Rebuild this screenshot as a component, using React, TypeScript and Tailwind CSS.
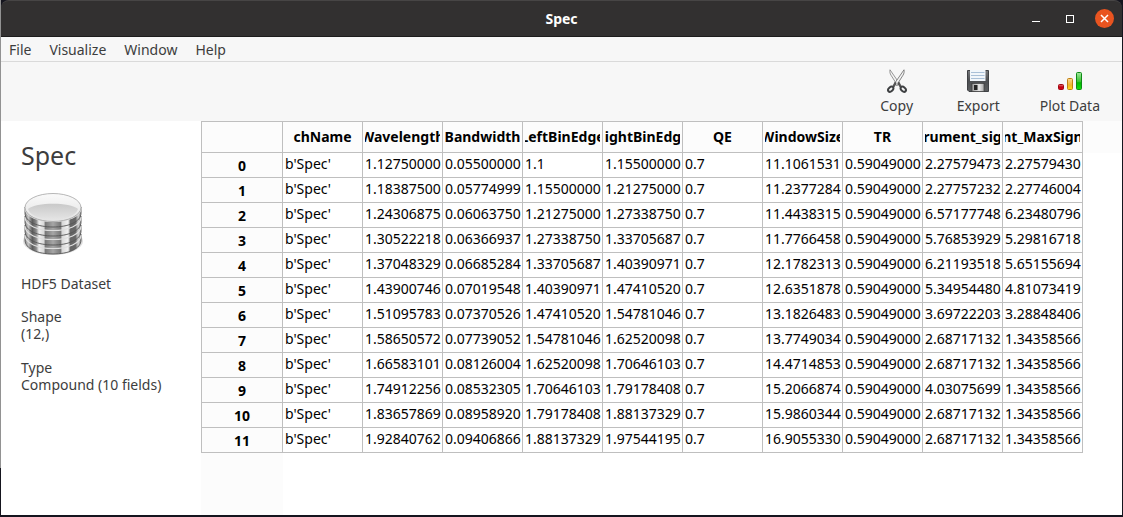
import React from "react";

const menus = ["File", "Visualize", "Window", "Help"];

const columns = [
  "chName",
  "Wavelength",
  "Bandwidth",
  "LeftBinEdge",
  "RightBinEdge",
  "QE",
  "WindowSize",
  "TR",
  "rument_sig",
  "nt_MaxSign",
];

const rows: string[][] = [
  ["1.12750000", "0.05500000", "1.1", "1.15500000", "0.7", "11.1061531", "0.59049000", "2.27579473", "2.27579430"],
  ["1.18387500", "0.05774999", "1.15500000", "1.21275000", "0.7", "11.2377284", "0.59049000", "2.27757232", "2.27746004"],
  ["1.24306875", "0.06063750", "1.21275000", "1.27338750", "0.7", "11.4438315", "0.59049000", "6.57177748", "6.23480796"],
  ["1.30522218", "0.06366937", "1.27338750", "1.33705687", "0.7", "11.7766458", "0.59049000", "5.76853929", "5.29816718"],
  ["1.37048329", "0.06685284", "1.33705687", "1.40390971", "0.7", "12.1782313", "0.59049000", "6.21193518", "5.65155694"],
  ["1.43900746", "0.07019548", "1.40390971", "1.47410520", "0.7", "12.6351878", "0.59049000", "5.34954480", "4.81073419"],
  ["1.51095783", "0.07370526", "1.47410520", "1.54781046", "0.7", "13.1826483", "0.59049000", "3.69722203", "3.28848406"],
  ["1.58650572", "0.07739052", "1.54781046", "1.62520098", "0.7", "13.7749034", "0.59049000", "2.68717132", "1.34358566"],
  ["1.66583101", "0.08126004", "1.62520098", "1.70646103", "0.7", "14.4714853", "0.59049000", "2.68717132", "1.34358566"],
  ["1.74912256", "0.08532305", "1.70646103", "1.79178408", "0.7", "15.2066874", "0.59049000", "4.03075699", "1.34358566"],
  ["1.83657869", "0.08958920", "1.79178408", "1.88137329", "0.7", "15.9860344", "0.59049000", "2.68717132", "1.34358566"],
  ["1.92840762", "0.09406866", "1.88137329", "1.97544195", "0.7", "16.9055330", "0.59049000", "2.68717132", "1.34358566"],
];

function ScissorsIcon() {
  return (
    <svg width="24" height="24" viewBox="0 0 24 24" aria-hidden="true">
      <path d="M5 .8 C4.6 3 5 4.6 6 6.2 L12.6 16.6 L14.4 14.4 Z" fill="#f4f4f4" stroke="#8a8a8a" strokeWidth=".9" />
      <path d="M19 .8 C19.4 3 19 4.6 18 6.2 L11.4 16.6 L9.6 14.4 Z" fill="#f4f4f4" stroke="#777" strokeWidth=".9" />
      <path d="M10.8 13.4 L8.2 18 M13.2 13.4 L15.8 18" stroke="#555" strokeWidth="2.4" />
      <ellipse cx="5.7" cy="20.2" rx="3" ry="2" transform="rotate(-42 5.7 20.2)" fill="#f7f7f7" stroke="#3e4042" strokeWidth="2" />
      <ellipse cx="18.3" cy="20.2" rx="3" ry="2" transform="rotate(42 18.3 20.2)" fill="#f7f7f7" stroke="#3e4042" strokeWidth="2" />
      <circle cx="12" cy="14" r=".8" fill="#ddd" />
    </svg>
  );
}

function FloppyIcon() {
  return (
    <svg width="24" height="24" viewBox="0 0 24 24" aria-hidden="true">
      <defs>
        <linearGradient id="body" x1="0" y1="0" x2="0" y2="1">
          <stop offset="0" stopColor="#77797c" />
          <stop offset=".5" stopColor="#4c4e51" />
          <stop offset="1" stopColor="#5c5e60" />
        </linearGradient>
        <linearGradient id="shutter" x1="0" y1="0" x2="1" y2="0">
          <stop offset="0" stopColor="#9a9a9a" />
          <stop offset=".6" stopColor="#e6e6e6" />
          <stop offset="1" stopColor="#a8a8a8" />
        </linearGradient>
      </defs>
      <path d="M1.5 1.5 H22.5 V22.5 H3 L1.5 21 Z" fill="url(#body)" stroke="#3f4144" />
      <rect x="4" y="1" width="15.5" height="11" fill="#f1f6fb" />
      <path d="M5 3.5 H18.5 M5 6.5 H18.5 M5 9.5 H18.5" stroke="#a9c0d8" />
      <rect x="6" y="14.5" width="12" height="8" fill="url(#shutter)" stroke="#333" strokeWidth=".6" />
      <rect x="8" y="16" width="3.5" height="5" fill="#232323" />
    </svg>
  );
}

function BarsIcon() {
  return (
    <svg width="26" height="24" viewBox="0 0 26 24" aria-hidden="true">
      <defs>
        <linearGradient id="green" x1="0" y1="0" x2="0" y2="1">
          <stop offset="0" stopColor="#a4e6a0" />
          <stop offset=".55" stopColor="#35c22e" />
          <stop offset=".6" stopColor="#00b800" />
          <stop offset="1" stopColor="#12dc10" />
        </linearGradient>
        <linearGradient id="amber" x1="0" y1="0" x2="0" y2="1">
          <stop offset="0" stopColor="#f8d797" />
          <stop offset=".6" stopColor="#eeb52c" />
          <stop offset="1" stopColor="#ffdf10" />
        </linearGradient>
        <linearGradient id="red" x1="0" y1="0" x2="0" y2="1">
          <stop offset="0" stopColor="#e87b7b" />
          <stop offset=".5" stopColor="#c00010" />
          <stop offset="1" stopColor="#e00018" />
        </linearGradient>
      </defs>
      <rect x="1.5" y="15.5" width="5" height="5" rx="1" fill="url(#red)" stroke="#a00812" />
      <rect x="10.5" y="9.5" width="5" height="11" rx="1" fill="url(#amber)" stroke="#c07f10" />
      <rect x="19.5" y="3.5" width="5" height="17" rx="1" fill="url(#green)" stroke="#0d8a16" />
    </svg>
  );
}

function DatabaseIcon() {
  return (
    <svg width="64" height="64" viewBox="0 0 64 64" aria-hidden="true">
      <defs>
        <linearGradient id="metal" x1="0" y1="0" x2="1" y2="0">
          <stop offset="0" stopColor="#8a8a8a" />
          <stop offset=".06" stopColor="#c5c5c5" />
          <stop offset=".13" stopColor="#5c5c5c" />
          <stop offset=".2" stopColor="#8a8a8a" />
          <stop offset=".25" stopColor="#f0f0f0" />
          <stop offset=".34" stopColor="#d8d8d8" />
          <stop offset=".36" stopColor="#777" />
          <stop offset=".5" stopColor="#a6a6a6" />
          <stop offset=".64" stopColor="#777" />
          <stop offset=".66" stopColor="#d8d8d8" />
          <stop offset=".77" stopColor="#f2f2f2" />
          <stop offset=".81" stopColor="#666" />
          <stop offset=".9" stopColor="#666" />
          <stop offset=".95" stopColor="#cfcfcf" />
          <stop offset="1" stopColor="#8a8a8a" />
        </linearGradient>
        <linearGradient id="lid" x1="0" y1="0" x2="0" y2="1">
          <stop offset="0" stopColor="#fafafa" />
          <stop offset="1" stopColor="#e2e2e2" />
        </linearGradient>
        <linearGradient id="pool" x1="0" y1="0" x2="0" y2="1">
          <stop offset="0" stopColor="#c9c9c9" />
          <stop offset="1" stopColor="#e4e4e4" />
        </linearGradient>
      </defs>
      <ellipse cx="32" cy="49" rx="30" ry="14" fill="#dedede" />
      {[42, 33, 24, 15].map((y) => (
        <g key={y} transform={`translate(0 ${y})`}>
          <path d="M4 0 V6 C4 15 17 20 32 20 C47 20 60 15 60 6 V0 Z" fill="url(#metal)" stroke="#555" strokeWidth=".9" />
          <path d="M4 1 C4 9.500 17 14.500 32 14.500 C47 14.500 60 9.500 60 1" fill="none" stroke="#dedede" strokeWidth="1.2" />
        </g>
      ))}
      <ellipse cx="32" cy="15.5" rx="28" ry="14" fill="url(#lid)" stroke="#a5a5a5" strokeWidth=".8" />
      <path d="M7 17 C15 10 49 10 57 17 C55 23 46 27.500 32 27.500 C18 27.500 9 23 7 17 Z" fill="url(#pool)" />
    </svg>
  );
}

function Tool({ label, children }: { label: string; children: React.ReactNode }) {
  return (
    <button type="button" className="flex min-w-20 flex-col items-center gap-[3px] px-5 pt-[7px] pb-1">
      {children}
      <span className="leading-5">{label}</span>
    </button>
  );
}

export default function App() {
  return (
    <div className="flex min-h-screen flex-col bg-[#15151e] bg-[linear-gradient(#929292,#929292)] bg-[length:1px_468px] bg-no-repeat px-px pb-[2px] font-['Noto_Sans',sans-serif] text-[14px] text-[#3d3d3d]">
      <header className="grid h-[37px] grid-cols-[1fr_auto_1fr] items-center rounded-t-lg border-t border-b border-t-[#474545] border-b-[#1d1c1c] bg-[#323030] text-white">
        <h1 className="col-start-2 font-bold">Spec</h1>
        <div className="flex items-center justify-end gap-4 pr-2">
          <button type="button" aria-label="Minimize" className="flex size-[18px] items-center justify-center">
            <svg width="10" height="10" viewBox="0 0 10 10"><path d="M1 7.500 H9" stroke="white" /></svg>
          </button>
          <button type="button" aria-label="Maximize" className="flex size-[18px] items-center justify-center">
            <svg width="10" height="10" viewBox="0 0 10 10"><rect x="1.500" y="1.500" width="7" height="7" fill="none" stroke="white" /></svg>
          </button>
          <button type="button" aria-label="Close" className="flex size-[19px] items-center justify-center rounded-full bg-[#e95420]">
            <svg width="9" height="9" viewBox="0 0 9 9"><path d="M1 1 L8 8 M8 1 L1 8" stroke="white" strokeWidth="1.5" /></svg>
          </button>
        </div>
      </header>

      <nav className="flex h-[25px] items-center gap-[18px] border-b border-[#dadada] bg-[#f7f7f7] px-2">
        {menus.map((m) => (
          <button key={m} type="button">{m}</button>
        ))}
      </nav>

      <div className="flex h-[59px] justify-end bg-[#f7f7f7] pr-[2px]">
        <Tool label="Copy"><ScissorsIcon /></Tool>
        <Tool label="Export"><FloppyIcon /></Tool>
        <Tool label="Plot Data"><BarsIcon /></Tool>
      </div>

      <main className="flex flex-1 bg-white">
        <aside className="w-[200px] shrink-0 px-5 pt-4 leading-[17px]">
          <h2 className="text-[25px] leading-9">Spec</h2>
          <div className="pt-[19px] pb-[19px]"><DatabaseIcon /></div>
          <p>HDF5 Dataset</p>
          <dl>
            <dt className="pt-4">Shape</dt>
            <dd>(12,)</dd>
            <dt className="pt-[17px]">Type</dt>
            <dd>Compound (10 fields)</dd>
          </dl>
        </aside>

        <section className="flex min-w-0 flex-1 flex-col overflow-x-auto">
          <table className="w-full min-w-[882px] table-fixed border-separate border-spacing-0 text-black">
            <colgroup>
              <col className="w-[82px]" />
              {columns.map((c) => <col key={c} className="w-20" />)}
              <col />
            </colgroup>
            <thead>
              <tr className="h-8 bg-[#fcfcfc]">
                <td className="border border-[#bfbfbf] p-0" />
                {columns.map((c) => (
                  <th key={c} scope="col" className="border-t border-r border-b border-[#bfbfbf] p-0">
                    <div className="mx-[2px] flex justify-center overflow-hidden leading-5 whitespace-nowrap">{c}</div>
                  </th>
                ))}
                <td className="p-0" />
              </tr>
            </thead>
            <tbody>
              {rows.map((r, i) => (
                <tr key={i} className="h-[25px]">
                  <th scope="row" className="border-r border-b border-l border-[#bfbfbf] bg-[#fcfcfc] p-0 pt-[2px] leading-5">{i}</th>
                  {["b'Spec'", ...r].map((v, j) => (
                    <td key={j} className="overflow-hidden border-r border-b border-[#bfbfbf] p-0 pb-[2px] pl-[2px] leading-5 whitespace-nowrap">{v}</td>
                  ))}
                  <td className="p-0" />
                </tr>
              ))}
            </tbody>
          </table>
          <div className="w-[82px] flex-1 bg-[#fcfcfc]" />
        </section>
      </main>
    </div>
  );
}
